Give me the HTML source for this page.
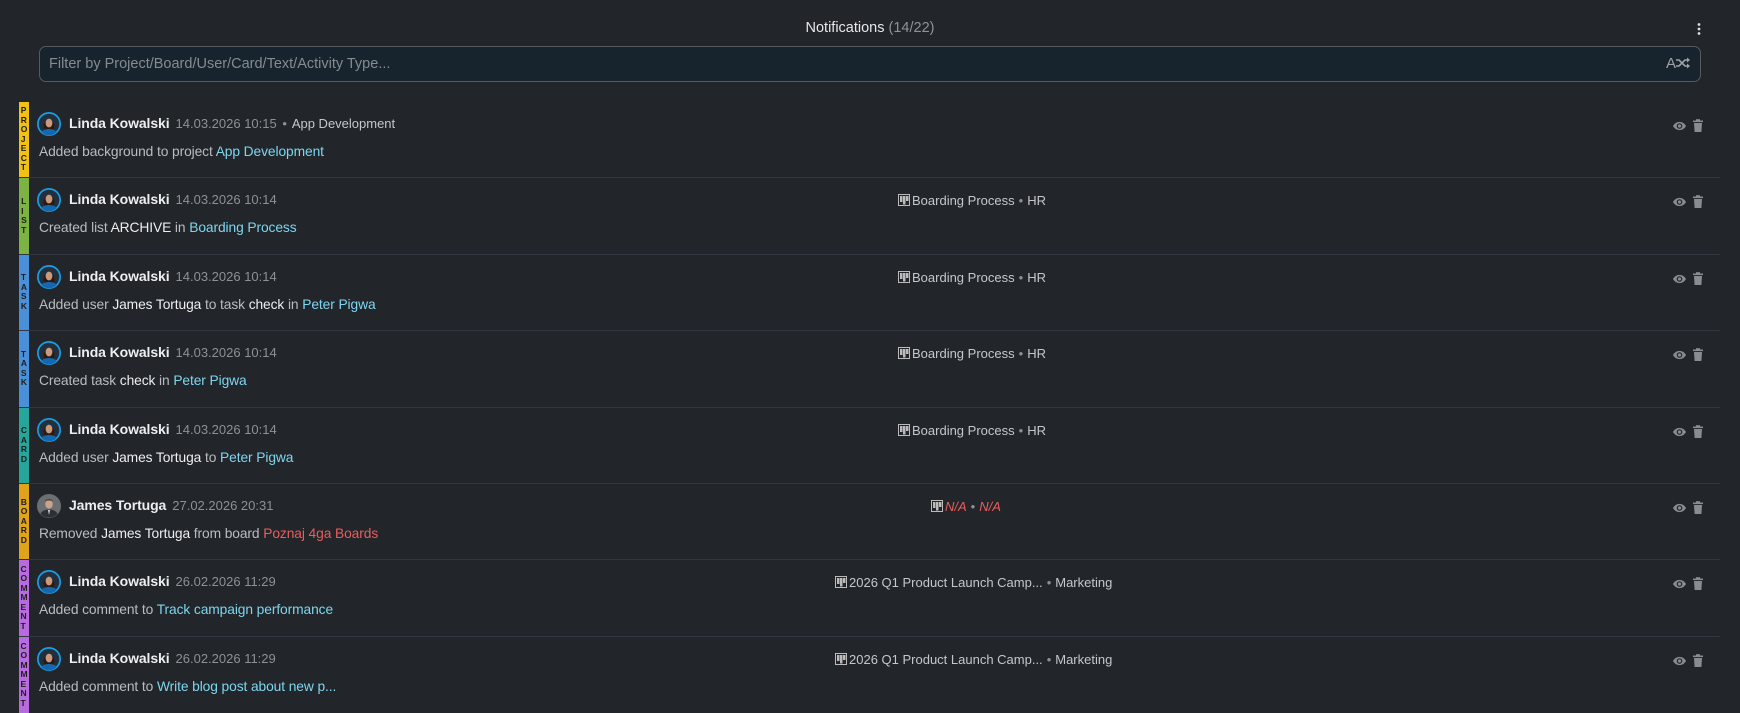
<!DOCTYPE html>
<html><head><meta charset="utf-8">
<style>
*{margin:0;padding:0;box-sizing:border-box}
body{width:1740px;height:713px;background:#222529;font-family:"Liberation Sans",sans-serif;overflow:hidden;position:relative;color:#c4c7cc}
.title{position:absolute;top:20px;left:0;width:1740px;text-align:center;font-size:14.5px;color:#e6e8ea}
.title span{color:#8f9398}
.kebab{position:absolute;left:1697px;top:23px}
.filter{position:absolute;left:39px;top:46px;width:1662px;height:36px;background:#17232d;border:1px solid #545a60;border-radius:7px}
.filter .ph{position:absolute;left:9px;top:9px;font-size:14.5px;color:#868b90}
.filter .ic{position:absolute;right:10px;top:8px;font-size:15px;color:#9ea2a6}
.row{position:absolute;left:19px;width:1701px;height:76.4px;border-bottom:1px solid #303741}
.strip{position:absolute;left:0;top:0;width:10px;height:100%;display:flex;flex-direction:column;align-items:center;justify-content:center;font-size:8.5px;font-weight:bold;color:#1e1e1e;line-height:9.5px}
.av{position:absolute;left:18px;top:10px;width:24px;height:24px}
.line1{position:absolute;left:50px;top:13px;white-space:nowrap}
.name{font-size:14px;font-weight:bold;color:#eceef0;letter-spacing:-0.1px}
.date{font-size:13px;color:#8d9196;margin-left:6px}
.date b{font-weight:normal;color:#c4c7cc}
.body{position:absolute;left:20px;top:42px;font-size:13.8px;color:#b9bcc1;letter-spacing:-0.1px}
.body b{font-weight:normal;color:#eceef0}
.body a{color:#7dd6ef;text-decoration:none}
.body a.r{color:#ea5d5d}
.board{position:absolute;top:15px;font-size:13px;color:#c4c7cc;white-space:nowrap}
.board svg{vertical-align:-1px;margin-right:2px}
.board .dot{color:#8d9196;margin:0 4px}
.na{color:#ea5d5d;font-style:italic}
.acts{position:absolute;left:1654px;top:16px}
</style></head><body>
<div class="title">Notifications <span>(14/22)</span></div>
<svg class="kebab" width="4" height="12"><circle cx="2" cy="1.5" r="1.4" fill="#ddd"/><circle cx="2" cy="6" r="1.4" fill="#ddd"/><circle cx="2" cy="10.5" r="1.4" fill="#ddd"/></svg>
<div class="filter"><div class="ph">Filter by Project/Board/User/Card/Text/Activity Type...</div>
<div class="ic">A<svg width="14" height="12" viewBox="0 0 14 12" style="vertical-align:-1px"><path d="M0 3h3l6 6h3M0 9h3l6-6h3" stroke="#9ea2a6" stroke-width="1.6" fill="none"/><path d="M11 0.5l3 2.5-3 2.5zM11 6.5l3 2.5-3 2.5z" fill="#9ea2a6"/></svg></div></div>

<svg width="0" height="0" style="position:absolute">
<defs>
<g id="lin"><circle cx="12" cy="12" r="12" fill="#1a9ee6"/><circle cx="12" cy="12" r="10.3" fill="#22303e"/><path d="M6.5 15c0-10 11-10 11 0l-1 3h-9z" fill="#2a1a14"/><ellipse cx="12" cy="11" rx="3.4" ry="4.4" fill="#c99a7e"/><path d="M4.5 20c2-4 13-4 15 0a10 10 0 0 1-15 0z" fill="#1567b0"/></g>
<g id="jam"><circle cx="12" cy="12" r="12" fill="#6c6f72"/><ellipse cx="12" cy="10" rx="3.8" ry="4.6" fill="#c9a48c"/><path d="M8 8c0-4 8-4 8 0c-1-2-7-2-8 0z" fill="#5a4030"/><path d="M3.5 20c2-6 15-6 17 0a12 12 0 0 1-17 0z" fill="#2b3036"/><path d="M11 16l1 5 1-5z" fill="#ddd"/></g>
<g id="bd"><rect x="0.5" y="0.5" width="11" height="11" fill="none" stroke="#bbb"/><rect x="2" y="2" width="2.5" height="6" fill="#bbb"/><rect x="5" y="2" width="2.5" height="8.5" fill="#bbb"/><rect x="8" y="2" width="2.5" height="5" fill="#bbb"/></g>
<g id="ac"><path d="M0 8c3-5.5 10-5.5 13 0c-3 5.5-10 5.5-13 0z" fill="#8a8d90"/><circle cx="6.5" cy="8" r="2.8" fill="#222529"/><circle cx="6.5" cy="8" r="1.6" fill="#8a8d90"/><rect x="20" y="2.5" width="10" height="1.6" fill="#8a8d90"/><rect x="23" y="1.2" width="4" height="1.5" fill="#8a8d90"/><path d="M21 5h8l-0.6 9h-6.8z" fill="#8a8d90"/></g>
</defs></svg>

<div class="row" style="top:102px"><div class="strip" style="background:#f2c114">P<br>R<br>O<br>J<br>E<br>C<br>T</div>
<svg class="av"><use href="#lin"/></svg><div class="line1"><span class="name">Linda Kowalski</span><span class="date">14.03.2026 10:15 <span style="margin:0 2px">•</span> <b>App Development</b></span></div>
<div class="body">Added background to project <a>App Development</a></div>
<svg class="acts" width="32" height="16"><use href="#ac"/></svg></div>

<div class="row" style="top:178.4px"><div class="strip" style="background:#7cb342">L<br>I<br>S<br>T</div>
<svg class="av"><use href="#lin"/></svg><div class="line1"><span class="name">Linda Kowalski</span><span class="date">14.03.2026 10:14</span></div>
<div class="board" style="left:879px"><svg width="12" height="12"><use href="#bd"/></svg>Boarding Process<span class="dot">•</span>HR</div>
<div class="body">Created list <b>ARCHIVE</b> in <a>Boarding Process</a></div>
<svg class="acts" width="32" height="16"><use href="#ac"/></svg></div>

<div class="row" style="top:254.8px"><div class="strip" style="background:#4a90d9">T<br>A<br>S<br>K</div>
<svg class="av"><use href="#lin"/></svg><div class="line1"><span class="name">Linda Kowalski</span><span class="date">14.03.2026 10:14</span></div>
<div class="board" style="left:879px"><svg width="12" height="12"><use href="#bd"/></svg>Boarding Process<span class="dot">•</span>HR</div>
<div class="body">Added user <b>James Tortuga</b> to task <b>check</b> in <a>Peter Pigwa</a></div>
<svg class="acts" width="32" height="16"><use href="#ac"/></svg></div>

<div class="row" style="top:331.2px"><div class="strip" style="background:#4a90d9">T<br>A<br>S<br>K</div>
<svg class="av"><use href="#lin"/></svg><div class="line1"><span class="name">Linda Kowalski</span><span class="date">14.03.2026 10:14</span></div>
<div class="board" style="left:879px"><svg width="12" height="12"><use href="#bd"/></svg>Boarding Process<span class="dot">•</span>HR</div>
<div class="body">Created task <b>check</b> in <a>Peter Pigwa</a></div>
<svg class="acts" width="32" height="16"><use href="#ac"/></svg></div>

<div class="row" style="top:407.6px"><div class="strip" style="background:#26a69a">C<br>A<br>R<br>D</div>
<svg class="av"><use href="#lin"/></svg><div class="line1"><span class="name">Linda Kowalski</span><span class="date">14.03.2026 10:14</span></div>
<div class="board" style="left:879px"><svg width="12" height="12"><use href="#bd"/></svg>Boarding Process<span class="dot">•</span>HR</div>
<div class="body">Added user <b>James Tortuga</b> to <a>Peter Pigwa</a></div>
<svg class="acts" width="32" height="16"><use href="#ac"/></svg></div>

<div class="row" style="top:484px"><div class="strip" style="background:#e0a31c">B<br>O<br>A<br>R<br>D</div>
<svg class="av"><use href="#jam"/></svg><div class="line1"><span class="name">James Tortuga</span><span class="date">27.02.2026 20:31</span></div>
<div class="board" style="left:912px"><svg width="12" height="12"><use href="#bd"/></svg><span class="na">N/A</span><span class="dot">•</span><span class="na">N/A</span></div>
<div class="body">Removed <b>James Tortuga</b> from board <a class="r">Poznaj 4ga Boards</a></div>
<svg class="acts" width="32" height="16"><use href="#ac"/></svg></div>

<div class="row" style="top:560.4px"><div class="strip" style="background:#b86ae0">C<br>O<br>M<br>M<br>E<br>N<br>T</div>
<svg class="av"><use href="#lin"/></svg><div class="line1"><span class="name">Linda Kowalski</span><span class="date">26.02.2026 11:29</span></div>
<div class="board" style="left:816px"><svg width="12" height="12"><use href="#bd"/></svg>2026 Q1 Product Launch Camp...<span class="dot">•</span>Marketing</div>
<div class="body">Added comment to <a>Track campaign performance</a></div>
<svg class="acts" width="32" height="16"><use href="#ac"/></svg></div>

<div class="row" style="top:636.8px;border-bottom:none"><div class="strip" style="background:#b86ae0">C<br>O<br>M<br>M<br>E<br>N<br>T</div>
<svg class="av"><use href="#lin"/></svg><div class="line1"><span class="name">Linda Kowalski</span><span class="date">26.02.2026 11:29</span></div>
<div class="board" style="left:816px"><svg width="12" height="12"><use href="#bd"/></svg>2026 Q1 Product Launch Camp...<span class="dot">•</span>Marketing</div>
<div class="body">Added comment to <a>Write blog post about new p...</a></div>
<svg class="acts" width="32" height="16"><use href="#ac"/></svg></div>
</body></html>
